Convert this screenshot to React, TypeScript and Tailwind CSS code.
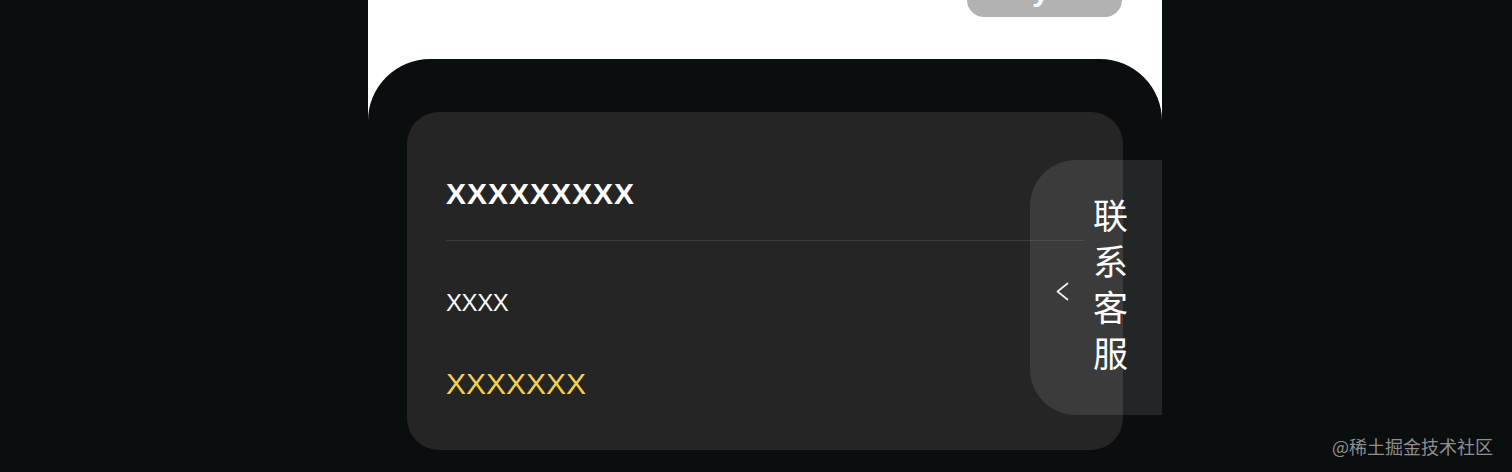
import React from "react";

export default function App() {
  return (
    <div
      className="relative w-[1512px] h-[472px] overflow-hidden bg-[#0a0e0f]"
      style={{ fontFamily: '"Liberation Sans", Arial, "Noto Sans CJK SC", sans-serif' }}
    >
      <div className="ml-[368px] w-[794px] h-[472px] bg-white flex flex-col">
        {/* top white area */}
        <div className="h-[59px] flex justify-end pr-[40px]">
          <div className="-mt-[33px] h-[50px] w-[155px] rounded-[17px] bg-[#b2b2b2] flex items-center justify-center text-white text-[30px] font-bold leading-none">
            <span className="translate-y-[-1px] translate-x-[-4px]">y</span>
          </div>
        </div>

        {/* dark section */}
        <div className="relative flex-1 bg-[#0a0e0f] rounded-t-[62px] px-[39px] pt-[53px]">
          <div className="w-[716px] rounded-[32px] bg-[#252525] px-[39px] pb-[47px]">
            <div className="h-[129px] pt-[34px] flex items-center border-b border-[#3a3a3a] text-white text-[30px] font-bold tracking-[1px]">
              XXXXXXXXX
            </div>
            <div className="mt-[42px] h-[40px] flex items-center text-white text-[24px] tracking-[-0.4px]">
              XXXX
            </div>
            <div className="mt-[40px] h-[40px] flex items-center text-[#f5d04f] text-[30px]">
              XXXXXXX
            </div>
          </div>

          {/* floating contact tab */}
          <div className="absolute right-0 top-[101px] w-[132px] h-[255px] rounded-l-[46px] bg-white/10 flex items-center pl-[25px]">
            <svg width="14" height="19" viewBox="0 0 14 19" className="mt-[7px] shrink-0" fill="none">
              <path d="M12.5 1.5 L2.5 9.5 L12.5 17.5" stroke="#f0f0f0" strokeWidth="1.7" strokeLinecap="round" strokeLinejoin="round" />
            </svg>
            <div
              className="ml-[24px] mb-[10px] flex flex-col text-white text-[35px] leading-[46px]"
              style={{ fontFamily: '"Noto Sans CJK SC", sans-serif' }}
            >
              <span>联</span>
              <span>系</span>
              <span>客</span>
              <span>服</span>
            </div>
          </div>
        </div>
      </div>

      {/* watermark */}
      <div
        className="absolute right-[19px] bottom-[17px] text-[18px] leading-none text-[#8d8f90]"
        style={{ fontFamily: '"Noto Sans CJK SC", sans-serif' }}
      >
        @稀土掘金技术社区
      </div>
    </div>
  );
}
